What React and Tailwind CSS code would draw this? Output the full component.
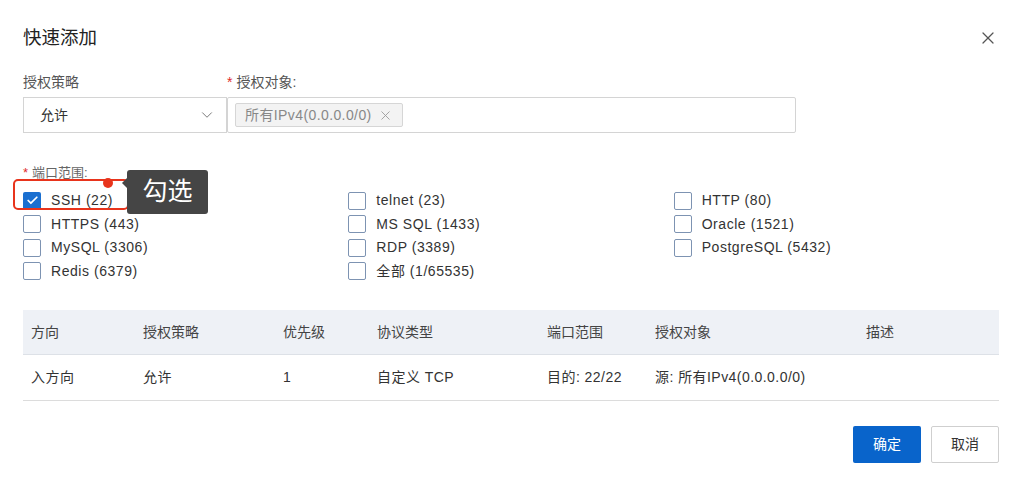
import { X, ChevronDown, Check } from 'lucide-react';

const ports = [
  ['SSH (22)', 'telnet (23)', 'HTTP (80)'],
  ['HTTPS (443)', 'MS SQL (1433)', 'Oracle (1521)'],
  ['MySQL (3306)', 'RDP (3389)', 'PostgreSQL (5432)'],
  ['Redis (6379)', '全部 (1/65535)', null],
];

const columns = ['方向', '授权策略', '优先级', '协议类型', '端口范围', '授权对象', '描述'];
const row = ['入方向', '允许', '1', '自定义 TCP', '目的: 22/22', '源: 所有IPv4(0.0.0.0/0)', ''];

function CheckBox({ checked }) {
  if (checked) {
    return (
      <span className="w-[18px] h-[18px] rounded-[2px] bg-[#1a6fd0] flex items-center justify-center shrink-0">
        <Check size={13} strokeWidth={3.2} className="text-white" />
      </span>
    );
  }
  return <span className="w-[18px] h-[18px] rounded-[2px] border border-[#7d93b2] bg-white shrink-0" />;
}

export default function App() {
  return (
    <div
      className="w-[1024px] h-[487px] bg-white text-[#333] pl-[23px] pr-[25px] overflow-hidden"
      style={{ fontFamily: '"Liberation Sans", "Noto Sans CJK SC", sans-serif' }}
    >
      <div className="flex items-center justify-between pt-[26px]">
        <h2 className="text-[18.5px] leading-[24px] text-[#222]">快速添加</h2>
        <X size={20} strokeWidth={1.5} className="text-[#555] mr-[1px]" />
      </div>

      <div className="flex mt-[22px]">
        <div className="w-[204px] flex flex-col">
          <div className="text-[14px] leading-[20px] text-[#555]">授权策略</div>
          <div className="mt-[5px] h-[36px] border border-[#d4d4d4] flex items-center justify-between pl-[16px] pr-[10px] text-[14px] text-[#333]">
            <span>允许</span>
            <ChevronDown size={18} strokeWidth={1.3} className="text-[#777]" />
          </div>
        </div>
        <div className="w-[569px] flex flex-col">
          <div className="text-[14px] leading-[20px] text-[#555]">
            <span className="text-[#e02b2b] mr-[4px]">*</span>授权对象:
          </div>
          <div className="mt-[5px] h-[36px] border border-[#d4d4d4] rounded-[2px] flex items-center px-[7px]">
            <span className="h-[24px] flex items-center gap-[6px] px-[9px] bg-[#f3f3f3] border border-[#d6d6d6] rounded-[2px] text-[14px] tracking-[0.4px] text-[#888]">
              所有IPv4(0.0.0.0/0)
              <X size={15} strokeWidth={1.4} className="text-[#999]" />
            </span>
          </div>
        </div>
      </div>

      <div className="mt-[30px] text-[13px] leading-[20px] text-[#666]">
        <span className="text-[#e02b2b] mr-[4px]">*</span>端口范围:
      </div>

      <div className="relative mt-[6px] grid grid-cols-3">
        {ports.flat().map((p, i) => (
          <div key={i} className="h-[23.5px] flex items-center">
            {p && (
              <>
                <CheckBox checked={i === 0} />
                <span className="ml-[10px] text-[14px] tracking-[0.55px] text-[#333]">{p}</span>
              </>
            )}
          </div>
        ))}

        <div className="absolute left-[-10px] top-[-10px] w-[116px] h-[31px] border-2 border-[#e8341c] rounded-[5px]" />
        <div className="absolute left-[80px] top-[-11px] w-[10px] h-[10px] rounded-full bg-[#e8341c]" />
        <div className="absolute left-[104px] top-[-19px] w-[81px] h-[44px] bg-[#454545] rounded-[3px] flex items-center justify-center text-white text-[25px]">
          勾选
          <span className="absolute left-[-5px] top-[7px] w-0 h-0 border-t-[6px] border-t-transparent border-b-[6px] border-b-transparent border-r-[6px] border-r-[#454545]" />
        </div>
      </div>

      <div className="mt-[27px] text-[14px]">
        <div className="h-[45px] bg-[#eef1f6] border-b border-[#dde1e7] grid grid-cols-[112px_140px_94px_170px_108px_211px_1fr] items-center pl-[8px] text-[#444]">
          {columns.map((c) => (
            <div key={c}>{c}</div>
          ))}
        </div>
        <div className="h-[46px] border-b border-[#dcdcdc] grid grid-cols-[112px_140px_94px_170px_108px_211px_1fr] items-center pl-[8px] text-[#333] tracking-[0.45px]">
          {row.map((c, i) => (
            <div key={i}>{c}</div>
          ))}
        </div>
      </div>

      <div className="mt-[25px] flex justify-end gap-[10px]">
        <button className="w-[68px] h-[37px] bg-[#0964cb] text-white text-[14px] rounded-[2px]">确定</button>
        <button className="w-[68px] h-[37px] bg-white border border-[#cfcfcf] text-[#333] text-[14px] rounded-[2px]">取消</button>
      </div>
    </div>
  );
}
